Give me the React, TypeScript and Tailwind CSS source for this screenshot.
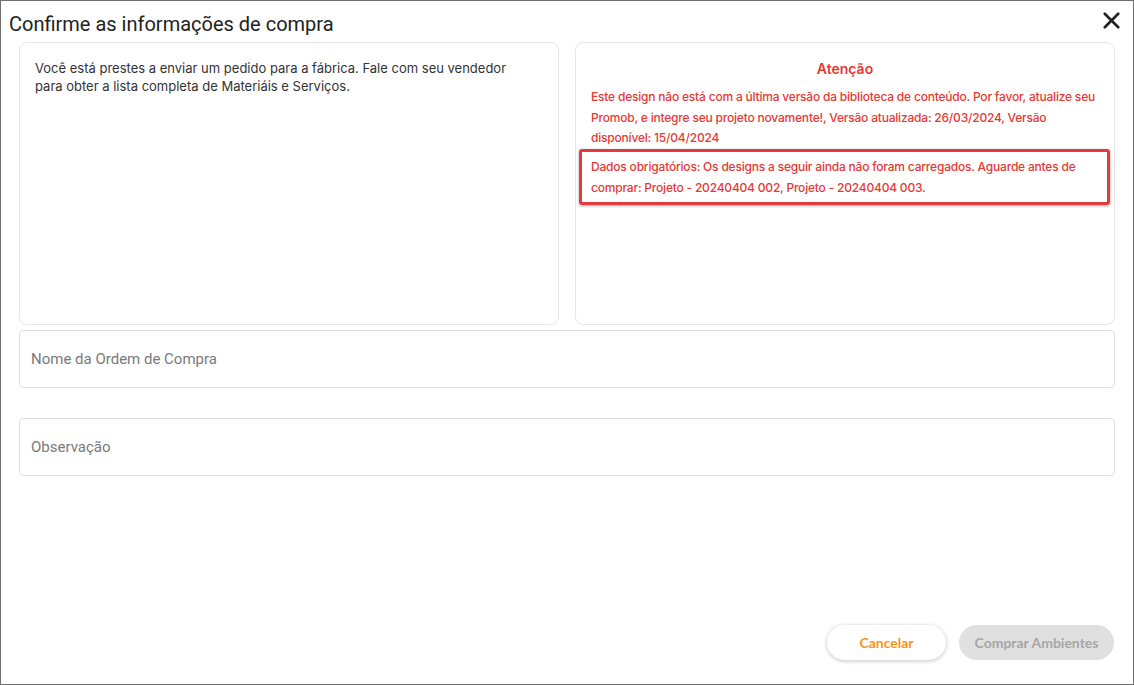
import React from 'react';
import { X } from 'lucide-react';

const App = () => {
  return (
    <div className="w-[1134px] h-[685px] bg-white border border-[#6e6e6e] flex flex-col">
      <div className="flex items-start justify-between h-[41px] pl-[8px] pr-[8px] pt-[9px]">
        <h1 className="text-[20px] leading-[28px] text-[#222222] font-['Roboto',sans-serif]">
          Confirme as informações de compra
        </h1>
        <button className="text-[#222222] -mt-[3px]">
          <X size={27} strokeWidth={2.4} />
        </button>
      </div>

      <div className="flex flex-col px-[18px]">
        <div className="grid grid-cols-2 gap-[16px] h-[283px]">
          <div className="border border-[#e6e6e6] rounded-[8px] pl-[15px] pr-[40px] pt-[16px] font-['Inter',sans-serif] text-[13px] leading-[18px] text-[#333333]">
            Você está prestes a enviar um pedido para a fábrica. Fale com seu vendedor para obter a
            lista completa de Materiáis e Serviços.
          </div>
          <div className="border border-[#e6e6e6] rounded-[8px] px-[3px] pt-[16px] font-['Inter',sans-serif] text-[#e53935]">
            <div className="text-center text-[14px] leading-[20px] font-semibold">Atenção</div>
            <div className="px-[12px] pt-[8px] text-[12px] leading-[20.5px] tracking-[-0.2px] font-medium">
              Este design não está com a última versão da biblioteca de conteúdo. Por favor, atualize seu
              Promob, e integre seu projeto novamente!, Versão atualizada: 26/03/2024, Versão
              disponível: 15/04/2024
            </div>
            <div className="mr-[1px] border-[3px] border-[#e53940] rounded-[3px] shadow-[0_1px_3px_rgba(0,0,0,0.35)] px-[9px] py-[4px] text-[12px] leading-[21px] tracking-[-0.2px] font-medium">
              Dados obrigatórios: Os designs a seguir ainda não foram carregados. Aguarde antes de
              comprar: Projeto - 20240404 002, Projeto - 20240404 003.
            </div>
          </div>
        </div>

        <div className="mt-[5px] h-[58px] border border-[#e0e0e0] rounded-[4px] flex items-center px-[11px]">
          <input
            placeholder="Nome da Ordem de Compra"
            className="w-full outline-none text-[15px] text-[#333] placeholder:text-[#7a7a7a] font-['Roboto',sans-serif]"
          />
        </div>

        <div className="mt-[30px] h-[58px] border border-[#e0e0e0] rounded-[4px] flex items-center px-[11px]">
          <input
            placeholder="Observação"
            className="w-full outline-none text-[15px] text-[#333] placeholder:text-[#7a7a7a] font-['Roboto',sans-serif]"
          />
        </div>
      </div>

      <div className="flex-1" />

      <div className="flex justify-end gap-[13px] pr-[19px] pb-[24px] font-['Lato',sans-serif]">
        <button className="w-[119px] h-[35px] rounded-full bg-white text-[#f7941d] font-bold text-[14px] shadow-[0_1px_4px_rgba(0,0,0,0.25)]">
          Cancelar
        </button>
        <button className="w-[155px] h-[35px] rounded-full bg-[#e0e0e0] text-[#a6a6a6] font-bold text-[14px]">
          Comprar Ambientes
        </button>
      </div>
    </div>
  );
};

export default App;
